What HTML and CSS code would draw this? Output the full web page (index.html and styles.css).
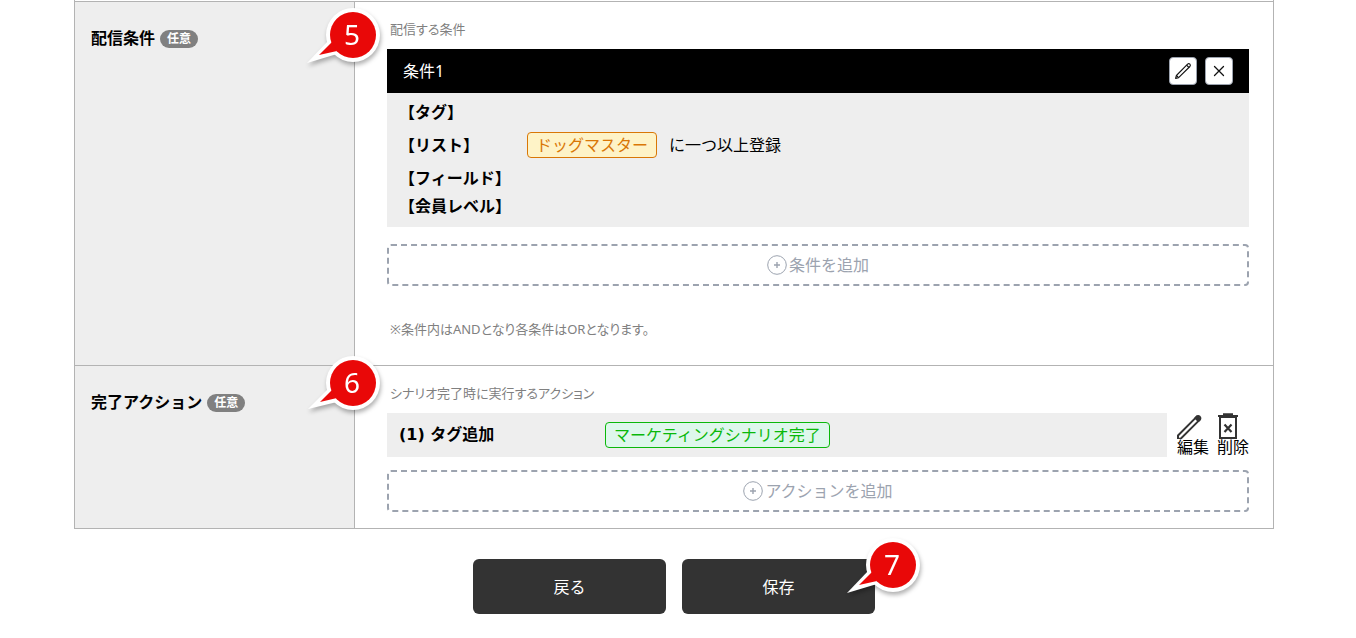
FILE: index.html
```
<!DOCTYPE html>
<html lang="ja">
<head>
    <meta charset="UTF-8">
    <meta name="viewport" content="width=device-width, initial-scale=1.0">
    <title>シナリオ設定</title>
    <link rel="stylesheet" href="styles.css">
</head>
<body>
    <main class="page">
        <div class="form">
            <section class="row">
                <div class="row-head">
                    <h2>配信条件</h2>
                    <span class="badge">任意</span>
                    <svg class="callout callout-first" width="90" height="76" viewBox="0 0 90 76">
                        <g fill="#fff"><circle cx="53" cy="35" r="27"/><path d="M7 63L29 40L37 54Z"/></g>
                        <g fill="#e90808"><circle cx="53" cy="35" r="23"/><path d="M19 55L32 42L37 51Z"/></g>
                        <text x="52" y="45">5</text>
                    </svg>
                </div>
                <div class="row-body">
                    <p class="hint">配信する条件</p>
                    <div class="condition">
                        <div class="condition-head">
                            <span>条件1</span>
                            <div class="condition-tools">
                                <button type="button" class="tool" aria-label="編集">
                                    <svg width="18" height="18" viewBox="0 0 18 18" fill="none" stroke="#111" stroke-width="1.1" stroke-linejoin="round">
                                        <path d="M1.6 16.4L2.4 13.5L13.6 2.1Q14.8 1.2 15.9 2.2Q16.9 3.3 15.9 4.5L4.6 15.7Z"/>
                                        <path d="M12.6 3.2L14.9 5.5M2.4 13.5L4.6 15.7"/>
                                    </svg>
                                </button>
                                <button type="button" class="tool" aria-label="閉じる">
                                    <svg width="12" height="12" viewBox="0 0 12 12" fill="none" stroke="#111" stroke-width="1.3" stroke-linecap="round">
                                        <path d="M1.5 1.5L10.5 10.5M10.5 1.5L1.5 10.5"/>
                                    </svg>
                                </button>
                            </div>
                        </div>
                        <dl class="condition-list">
                            <div><dt>【タグ】</dt></div>
                            <div class="has-chip">
                                <dt>【リスト】</dt>
                                <dd><span class="chip chip-list">ドッグマスター</span>に一つ以上登録</dd>
                            </div>
                            <div><dt>【フィールド】</dt></div>
                            <div><dt>【会員レベル】</dt></div>
                        </dl>
                    </div>
                    <button type="button" class="add">
                        <svg width="20" height="20" viewBox="0 0 20 20" fill="none" stroke="#9ca3af">
                            <circle cx="10" cy="10" r="9.3"/><path d="M10 7V13M7 10H13" stroke-width="1.4"/>
                        </svg>条件を追加
                    </button>
                    <p class="hint note">※条件内はANDとなり各条件はORとなります。</p>
                </div>
            </section>

            <section class="row">
                <div class="row-head">
                    <h2>完了アクション</h2>
                    <span class="badge">任意</span>
                    <svg class="callout callout-second" width="90" height="76" viewBox="0 0 90 76">
                        <g fill="#fff"><circle cx="53" cy="35" r="27"/><path d="M8 61L29 40L37 54Z"/></g>
                        <g fill="#e90808"><circle cx="53" cy="35" r="23"/><path d="M20 54L32 42L37 50Z"/></g>
                        <text x="52" y="45">6</text>
                    </svg>
                </div>
                <div class="row-body">
                    <p class="hint">シナリオ完了時に実行するアクション</p>
                    <div class="action">
                        <div class="action-bar">
                            <span class="action-name">(1) タグ追加</span>
                            <span class="chip chip-tag">マーケティングシナリオ完了</span>
                        </div>
                        <button type="button" class="action-tool">
                            <svg width="26" height="26" viewBox="0 0 26 26" fill="none" stroke="#333" stroke-width="2" stroke-linejoin="round">
                                <path d="M1 26V22.5L19.8 3.6Q21.2 2.4 22.6 3.6Q24 5 22.8 6.6L4 25.4Z"/>
                                <path d="M18.4 5L21.4 8L23 6.4L20 3.4Z" fill="#333"/>
                            </svg>
                            <span>編集</span>
                        </button>
                        <button type="button" class="action-tool">
                            <svg width="22" height="26" viewBox="0 0 22 26" fill="none" stroke="#333" stroke-width="2">
                                <path d="M6 1.2H16M1 3H21"/>
                                <path d="M3 4V25H19V4Z"/>
                                <path d="M7.5 11.5L14.5 19M14.5 11.5L7.5 19" stroke-width="2.2"/>
                            </svg>
                            <span>削除</span>
                        </button>
                    </div>
                    <button type="button" class="add">
                        <svg width="20" height="20" viewBox="0 0 20 20" fill="none" stroke="#9ca3af">
                            <circle cx="10" cy="10" r="9.3"/><path d="M10 7V13M7 10H13" stroke-width="1.4"/>
                        </svg>アクションを追加
                    </button>
                </div>
            </section>
        </div>

        <div class="buttons">
            <button type="button" class="btn">戻る</button>
            <div class="save">
                <button type="submit" class="btn">保存</button>
                <svg class="callout callout-save" width="90" height="76" viewBox="0 0 90 76">
                    <g fill="#fff"><circle cx="53" cy="35" r="27"/><path d="M7 63L29 40L37 54Z"/></g>
                    <g fill="#e90808"><circle cx="53" cy="35" r="23"/><path d="M19 55L32 42L37 51Z"/></g>
                    <text x="52" y="45">7</text>
                </svg>
            </div>
        </div>
    </main>
</body>
</html>
```

FILE: styles.css
```
* {
    box-sizing: border-box;
}

body {
    margin: 0;
    background: #fff;
    color: #000;
    font-family: "Noto Sans", "Noto Sans CJK JP", sans-serif;
    font-size: 16px;
    line-height: 24px;
}

h2, p, dl, dt, dd {
    margin: 0;
}

button {
    padding: 0;
    font: inherit;
    cursor: pointer;
}

svg {
    flex-shrink: 0;
}

.page {
    padding: 0 80px 24px 72px;
}

.form {
    max-width: 1200px;
    margin: 0 auto;
    padding-top: 1px;
    border: 1px solid #b3b3b3;
    border-top: none;
}

.row {
    display: grid;
    grid-template-columns: 280px 1fr;
    border-top: 1px solid #b3b3b3;
}

.row-head {
    position: relative;
    display: flex;
    align-items: flex-start;
    gap: 5px;
    padding: 24px 16px;
    background: #eee;
    border-right: 1px solid #b3b3b3;
}

.row-head h2 {
    font-size: 16px;
    font-weight: bold;
    line-height: 24px;
}

.badge {
    margin-top: 4px;
    padding: 0 7px;
    border-radius: 9px;
    background: #808080;
    color: #fff;
    font-size: 12px;
    font-weight: bold;
    line-height: 18px;
}

.row-body {
    padding: 16px 24px 16px 32px;
}

.hint {
    padding-left: 3px;
    color: #808080;
    font-size: 13px;
    line-height: 22px;
    font-feature-settings: "palt";
}

.note {
    margin: 32px 0 9px;
}

/* 条件 */
.condition {
    margin-top: 9px;
    background: #eee;
}

.condition-head {
    display: flex;
    align-items: center;
    justify-content: space-between;
    height: 44px;
    padding: 0 16px;
    background: #000;
    color: #fff;
}

.condition-tools {
    display: flex;
    gap: 8px;
}

.tool {
    display: flex;
    align-items: center;
    justify-content: center;
    width: 28px;
    height: 28px;
    border: 1px solid #9ca3af;
    border-radius: 4px;
    background: #fff;
}

.condition-list {
    padding: 5px 12px 7px;
}

.condition-list > div {
    display: grid;
    grid-template-columns: 128px 1fr;
    align-items: center;
    min-height: 28px;
}

.condition-list .has-chip {
    min-height: 38px;
}

.condition-list dt {
    font-weight: bold;
}

.condition-list dd {
    display: flex;
    align-items: center;
    gap: 12px;
}

.chip {
    padding: 0 8px;
    border: 1px solid;
    border-radius: 4px;
    line-height: 24px;
}

.chip-list {
    background: #fef3c7;
    color: #d97706;
}

.chip-tag {
    background: #def7ec;
    color: #0ab80a;
}

.add {
    display: flex;
    align-items: center;
    justify-content: center;
    gap: 2px;
    width: 100%;
    height: 42px;
    margin-top: 17px;
    border: 2px dashed #9ca3af;
    border-radius: 4px;
    background: #fff;
    color: #9ca3af;
}

/* アクション */
.action {
    display: flex;
    gap: 8px;
    margin-top: 9px;
}

.action + .add {
    margin-top: 13px;
}

.action-bar {
    flex: 1;
    display: flex;
    align-items: center;
    height: 44px;
    margin-right: 2px;
    padding: 0 12px;
    background: #eee;
}

.action-name {
    width: 206px;
    font-family: "DejaVu Sans", "Noto Sans CJK JP", sans-serif;
    font-weight: bold;
}

.action-tool {
    display: flex;
    flex-direction: column;
    align-items: flex-start;
    width: 32px;
    height: 44px;
    border: none;
    background: none;
    color: #000;
    line-height: 16px;
}

.buttons {
    display: flex;
    justify-content: center;
    gap: 16px;
    margin-top: 30px;
}

.save {
    position: relative;
}

.btn {
    width: 193px;
    height: 55px;
    border: none;
    border-radius: 6px;
    background: #333;
    color: #fff;
}

/* 番号の吹き出し */
.callout {
    position: absolute;
    z-index: 1;
    filter: drop-shadow(1px 3px 2px rgba(0, 0, 0, 0.3));
    pointer-events: none;
}

.callout text {
    fill: #fff;
    font-size: 28px;
    text-anchor: middle;
}

.callout-first {
    top: -2px;
    left: 225px;
}

.callout-second {
    top: -18px;
    left: 225px;
}

.callout-save {
    top: -29px;
    left: 158px;
}
```
